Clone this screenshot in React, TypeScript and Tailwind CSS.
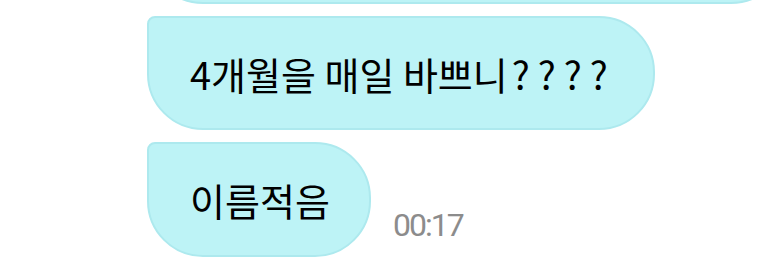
import React from 'react';

const bubble =
  'bg-[#bdf3f6] border-2 border-[#ade9ee] rounded-[56px] rounded-tl-[8px] flex items-center text-black shrink-0';

export default function App() {
  return (
    <div
      className="w-[776px] h-[280px] overflow-hidden bg-white pl-[147px] flex flex-col gap-[12px]"
      style={{ fontFamily: '"Noto Sans CJK KR", "Noto Sans", sans-serif' }}
    >
      {/* previous message, cut off by the top edge */}
      <div className={`${bubble} w-[640px] h-[114px] -mt-[110px]`} />

      <div className={`${bubble} self-start w-[508px] h-[114px] pl-[41px] text-[38px]`}>
        <span className="whitespace-nowrap">
          4개월을 매일 바쁘니<span className="ml-[4px] tracking-[8px]">????</span>
        </span>
      </div>

      <div className="flex items-end">
        <div className={`${bubble} w-[224px] h-[115px] pl-[41px] text-[38px]`}>
          <span className="whitespace-nowrap">이름적음</span>
        </div>
        <span
          className="ml-[22px] mb-[16px] text-[32px] leading-none tracking-[-2px] text-[#8c8c8c]"
          style={{ fontFamily: 'Roboto, "Noto Sans", sans-serif' }}
        >
          00:17
        </span>
      </div>
    </div>
  );
}
